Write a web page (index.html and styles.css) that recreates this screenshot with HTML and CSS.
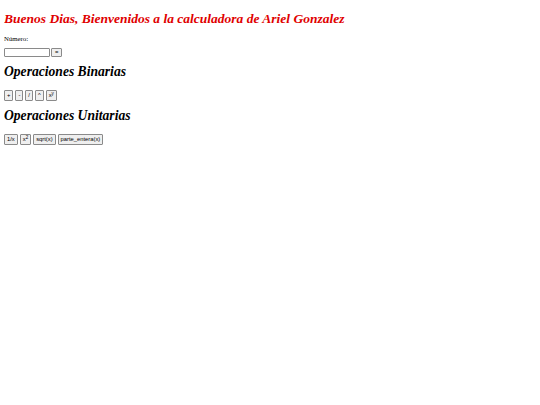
FILE: index.html
```html
<!DOCTYPE html>
<html>
<head>
<meta charset="utf-8">
<link rel="stylesheet" href="styles.css">
</head>
<body>
<h1 class="title">Buenos Dias, Bienvenidos a la calculadora de Ariel Gonzalez</h1>
<p class="label">Número:</p>
<div class="row input-row"><input class="num" type="text"><button class="btn">=</button></div>
<h2 class="section">Operaciones Binarias</h2>
<div class="row">
<button class="btn">+</button>
<button class="btn">-</button>
<button class="btn">/</button>
<button class="btn">^</button>
<button class="btn">x<sup>y</sup></button>
</div>
<h2 class="section">Operaciones Unitarias</h2>
<div class="row">
<button class="btn">1/x</button>
<button class="btn">x<sup>2</sup></button>
<button class="btn">sqrt(x)</button>
<button class="btn">parte_entera(x)</button>
</div>
</body>
</html>
```
FILE: styles.css
```css
body { margin: 0 4px; font-family: "Liberation Serif", serif; font-size: 8px; color: #000; background: #fff; }
.title { color: #e00000; font-style: italic; font-weight: bold; font-size: 13.5px; line-height: 15px; margin: 11px 0 0; }
.label { margin: 8px 0 0; font-size: 6.8px; line-height: 9px; }
.section { font-style: italic; font-weight: bold; font-size: 13.6px; line-height: 16px; margin: 7px 0 0; }
.row { display: flex; align-items: center; gap: 2px; margin-top: 10px; }
.input-row { margin-top: 5px; gap: 1px; }
.num { box-sizing: border-box; width: 46px; height: 9px; margin: 0; padding: 0; border: 1px solid #8a8a8a; border-radius: 1px; background: #fff; }
.btn { font-family: "Liberation Sans", sans-serif; font-size: 5.8px; line-height: 7px; padding: 1px 2px; margin: 0; border: 1px solid #8a8a8a; border-radius: 1px; background: #efefef; color: #000; }
.btn sup { font-size: 4.5px; line-height: 0; vertical-align: 2px; }
.input-row .btn { height: 9px; padding: 0 3px; line-height: 7px; }
```
